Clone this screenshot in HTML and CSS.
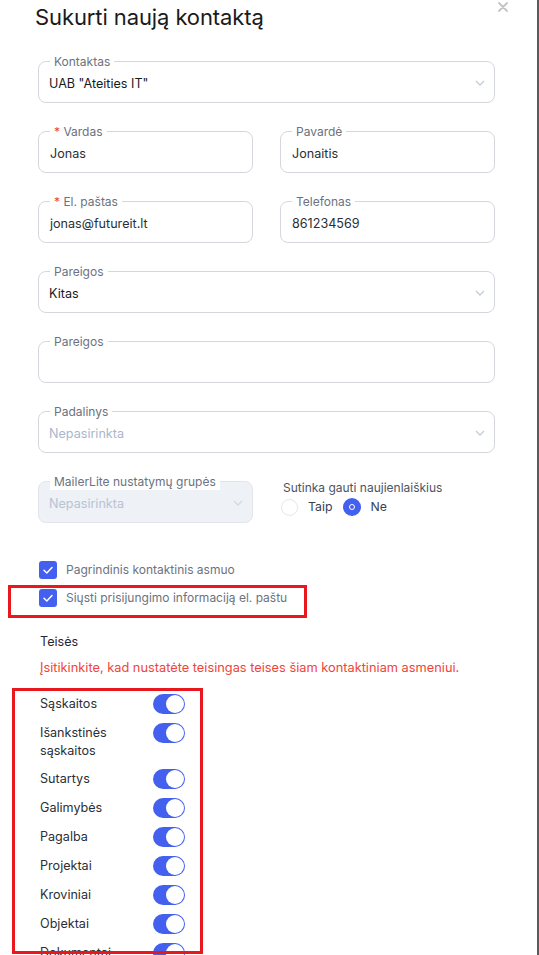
FILE: index.html
```html
<!DOCTYPE html>
<html lang="lt">
<head>
<meta charset="utf-8">
<title>Sukurti naują kontaktą</title>
<link rel="stylesheet" href="styles.css">
</head>
<body>
<div class="modal">
  <button class="close" aria-label="Uždaryti">
    <svg width="10" height="10" viewBox="0 0 10 10"><path d="M1 1 L9 9 M9 1 L1 9" stroke="#c4c4c4" stroke-width="1.8" fill="none" stroke-linecap="round"/></svg>
  </button>
  <h1 class="title">Sukurti naują kontaktą</h1>

  <div class="content">
    <div class="form">
      <div class="field select">
        <span class="label">Kontaktas</span>
        <span class="value">UAB "Ateities IT"</span>
        <svg class="chev" width="10" height="6" viewBox="0 0 10 6"><path d="M1 1 L5 5 L9 1" stroke="#c3cbd8" stroke-width="1.3" fill="none"/></svg>
      </div>

      <div class="row2">
        <div class="field input">
          <span class="label"><span class="req">*</span> Vardas</span>
          <span class="value">Jonas</span>
        </div>
        <div class="field input">
          <span class="label">Pavardė</span>
          <span class="value">Jonaitis</span>
        </div>
      </div>

      <div class="row2">
        <div class="field input">
          <span class="label"><span class="req">*</span> El. paštas</span>
          <span class="value">jonas@futureit.lt</span>
        </div>
        <div class="field input">
          <span class="label">Telefonas</span>
          <span class="value">861234569</span>
        </div>
      </div>

      <div class="field select">
        <span class="label">Pareigos</span>
        <span class="value">Kitas</span>
        <svg class="chev" width="10" height="6" viewBox="0 0 10 6"><path d="M1 1 L5 5 L9 1" stroke="#c3cbd8" stroke-width="1.3" fill="none"/></svg>
      </div>

      <div class="field input">
        <span class="label">Pareigos</span>
        <span class="value"></span>
      </div>

      <div class="field select">
        <span class="label">Padalinys</span>
        <span class="value placeholder">Nepasirinkta</span>
        <svg class="chev" width="10" height="6" viewBox="0 0 10 6"><path d="M1 1 L5 5 L9 1" stroke="#c3cbd8" stroke-width="1.3" fill="none"/></svg>
      </div>

      <div class="row2">
        <div class="field select disabled">
          <span class="label">MailerLite nustatymų grupės</span>
          <span class="value placeholder">Nepasirinkta</span>
          <svg class="chev" width="10" height="6" viewBox="0 0 10 6"><path d="M1 1 L5 5 L9 1" stroke="#d3d9e3" stroke-width="1.3" fill="none"/></svg>
        </div>
        <div class="consent">
          <span class="consent-label">Sutinka gauti naujienlaiškius</span>
          <div class="radios">
            <span class="radio"></span><span class="radio-text">Taip</span>
            <span class="radio checked"><span class="dot"></span></span><span class="radio-text">Ne</span>
          </div>
        </div>
      </div>
    </div>

    <div class="checks">
      <div class="check">
        <span class="box"><svg width="18" height="18" viewBox="0 0 18 18"><path d="M5 9.3 L7.8 12 L13 6.5" stroke="#fff" stroke-width="1.5" fill="none" stroke-linecap="round" stroke-linejoin="round"/></svg></span>
        <span class="check-text">Pagrindinis kontaktinis asmuo</span>
      </div>
      <div class="check">
        <span class="box"><svg width="18" height="18" viewBox="0 0 18 18"><path d="M5 9.3 L7.8 12 L13 6.5" stroke="#fff" stroke-width="1.5" fill="none" stroke-linecap="round" stroke-linejoin="round"/></svg></span>
        <span class="check-text">Siųsti prisijungimo informaciją el. paštu</span>
      </div>
    </div>

    <div class="perm-title">Teisės</div>
    <div class="warning">Įsitikinkite, kad nustatėte teisingas teises šiam kontaktiniam asmeniui.</div>

    <div class="perms">
      <span class="perm-name">Sąskaitos</span><span class="toggle"><span class="knob"></span></span>
      <span class="perm-name">Išankstinės sąskaitos</span><span class="toggle"><span class="knob"></span></span>
      <span class="perm-name">Sutartys</span><span class="toggle"><span class="knob"></span></span>
      <span class="perm-name">Galimybės</span><span class="toggle"><span class="knob"></span></span>
      <span class="perm-name">Pagalba</span><span class="toggle"><span class="knob"></span></span>
      <span class="perm-name">Projektai</span><span class="toggle"><span class="knob"></span></span>
      <span class="perm-name">Kroviniai</span><span class="toggle"><span class="knob"></span></span>
      <span class="perm-name">Objektai</span><span class="toggle"><span class="knob"></span></span>
      <span class="perm-name">Dokumentai</span><span class="toggle"><span class="knob"></span></span>
    </div>
  </div>

  <div class="mark mark-send"></div>
  <div class="mark mark-perms"></div>
</div>
</body>
</html>
```

FILE: styles.css
```css
* { box-sizing: border-box; }

html, body {
  margin: 0;
  height: 100%;
  overflow: hidden;
}

body {
  background: #5b5b5b;
  font-family: Inter, "Noto Sans", "Liberation Sans", sans-serif;
  color: #1f2937;
}

.modal {
  position: relative;
  width: 537px;
  height: 955px;
  background: #ffffff;
  padding: 2px 0 0 35px;
  overflow: hidden;
}

.close {
  position: absolute;
  top: 2px;
  left: 498px;
  width: 10px;
  height: 10px;
  padding: 0;
  border: 0;
  background: none;
  display: flex;
}

.title {
  margin: 0;
  font-size: 22px;
  line-height: 30px;
  font-weight: 400;
  color: #1a1a1a;
  letter-spacing: -0.1px;
}

.content {
  padding-left: 3px;
  width: 460px;
}

.form {
  margin-top: 29px;
  width: 457px;
  display: flex;
  flex-direction: column;
  gap: 28px;
}

.row2 {
  display: grid;
  grid-template-columns: 215px 215px;
  column-gap: 27px;
  align-items: start;
}

.field {
  position: relative;
  height: 42px;
  border: 1px solid #d4d7dc;
  border-radius: 8px;
  display: flex;
  align-items: center;
  justify-content: space-between;
  padding: 3px 9px 0 10px;
  background: #fff;
}

.field.input { padding-left: 11px; }

.field .label {
  position: absolute;
  top: -8px;
  left: 11px;
  padding: 0 4px;
  background: #fff;
  font-size: 12px;
  line-height: 16px;
  color: #6b7280;
  white-space: nowrap;
}

.req { color: #ef4444; }

.field .value {
  font-size: 12.6px;
  line-height: 20px;
  color: #2a2f36;
}

.field.select .value { color: #1a1a1a; }

.field .value.placeholder { color: #a9b6cb; }

.field.disabled {
  background: #eef1f6;
  border-color: #e1e5eb;
}

.field.disabled .value.placeholder { color: #b8c3d4; }

.chev { flex: none; margin-top: -2px; }

.consent {
  margin-top: -1px;
  padding-left: 1px;
  display: flex;
  flex-direction: column;
  gap: 2px;
}

.consent-label {
  font-size: 12px;
  line-height: 16px;
  color: #4b5563;
  padding-left: 2px;
}

.radios {
  display: flex;
  align-items: center;
  height: 18px;
}

.radio {
  width: 17px;
  height: 17px;
  border-radius: 50%;
  border: 1px solid #e3e6eb;
  background: #fff;
  margin-right: 10px;
  display: flex;
  align-items: center;
  justify-content: center;
}

.radio.checked {
  width: 18px;
  height: 18px;
  border: 0;
  background: #4361ee;
  margin-right: 9px;
}

.radio .dot {
  width: 6px;
  height: 6px;
  border-radius: 50%;
  border: 1.5px solid #fff;
}

.radio-text {
  font-size: 12.3px;
  line-height: 18px;
  color: #374151;
  margin-right: 11px;
}

.checks {
  margin-top: 38px;
  display: flex;
  flex-direction: column;
  gap: 10px;
}

.check {
  display: flex;
  align-items: center;
  gap: 9px;
  padding-left: 1px;
  height: 18px;
}

.check .box {
  width: 18px;
  height: 18px;
  border-radius: 3px;
  background: #4361ee;
  display: flex;
}

.check-text {
  font-size: 12px;
  line-height: 18px;
  color: #6b7280;
}

.perm-title {
  margin-top: 25px;
  padding-left: 2px;
  font-size: 12.6px;
  line-height: 20px;
  color: #1f2937;
}

.warning {
  margin-top: 6px;
  padding-left: 2px;
  font-size: 12.8px;
  line-height: 20px;
  color: #f04438;
  white-space: nowrap;
}

.perms {
  margin-top: 16px;
  padding-left: 2px;
  width: 147px;
  display: grid;
  grid-template-columns: 1fr 32px;
  column-gap: 8px;
  row-gap: 9px;
  align-items: start;
}

.perm-name {
  font-size: 12.6px;
  line-height: 18px;
  color: #2a2f36;
  padding-top: 1px;
}

.toggle {
  position: relative;
  width: 32px;
  height: 20px;
  border-radius: 10px;
  background: #4361ee;
}

.toggle .knob {
  position: absolute;
  top: 1px;
  right: 1px;
  width: 18px;
  height: 18px;
  border-radius: 50%;
  background: #fff;
}

.mark {
  position: absolute;
  border: 3px solid #e8181e;
  pointer-events: none;
}

.mark-send {
  left: 8px;
  top: 585px;
  width: 299px;
  height: 33px;
}

.mark-perms {
  left: 12px;
  top: 688px;
  width: 191px;
  height: 266px;
}
```
